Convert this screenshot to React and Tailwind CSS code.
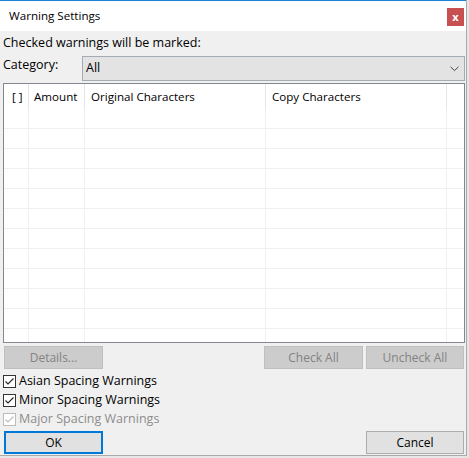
import React from "react";

const font = { fontFamily: '"Open Sans", "Noto Sans", sans-serif' };

function Check({ disabled }) {
  return (
    <span
      className={`w-[13px] h-[13px] border flex items-center justify-center shrink-0 bg-white ${
        disabled ? "border-[#bcbcbc]" : "border-[#333333]"
      }`}
    >
      <svg width="11" height="11" viewBox="0 0 11 11">
        <path
          d="M1.5 5.5 L4 8 L9.5 2.5"
          fill="none"
          stroke={disabled ? "#bcbcbc" : "#222222"}
          strokeWidth="1.1"
        />
      </svg>
    </span>
  );
}

function Btn({ children, disabled, primary, className = "" }) {
  const base = "h-[23px] flex items-center justify-center text-[12px] leading-none";
  let cls;
  if (disabled) cls = "bg-[#cccccc] border border-[#bfbfbf] text-[#838383]";
  else if (primary) cls = "bg-[#e1e1e1] border-2 border-[#0078d7] text-black";
  else cls = "bg-[#e1e1e1] border border-[#adadad] text-black";
  return <div className={`${base} ${cls} ${className}`}>{children}</div>;
}

export default function App() {
  const rows = Array.from({ length: 12 });
  return (
    <div className="w-[469px] h-[458px] bg-[#e6e6e6] overflow-hidden" style={font}>
      <div className="w-[467px] h-[456px] border-r border-b border-[#a9a9a9] bg-[#f0f0f0] flex flex-col">
        <div className="h-px bg-[#1883d7] w-full" />
        <div className="h-[30px] bg-white flex items-start justify-between">
          <span className="text-[11.6px] text-black pl-[9px] pt-[7px] leading-[16px]">Warning Settings</span>
          <div className="mt-[7px] mr-[2px] w-[17px] h-[18px] bg-[#c75050] flex items-center justify-center">
            <span className="text-white text-[11px] font-bold leading-none -mt-px">x</span>
          </div>
        </div>
        <div className="flex flex-col pl-[3px] pr-px">
          <div className="h-[16px] mt-[4px] text-[12.5px] leading-[16px] text-black">Checked warnings will be marked:</div>
          <div className="flex items-start mt-[5px] h-[25px]">
            <span className="w-[79px] text-[12.5px] leading-[16px] text-black mt-[1px]">Category:</span>
            <div className="flex-1 h-[25px] bg-[#e3e3e3] border border-[#a3abb5] flex items-center justify-between pl-[3px] pr-[5px]">
              <span className="text-[12.5px] leading-none text-black">All</span>
              <svg width="9" height="6" viewBox="0 0 9 6">
                <path d="M0.5 0.8 L4.5 4.6 L8.5 0.8" fill="none" stroke="#444" strokeWidth="1" />
              </svg>
            </div>
          </div>
          <div className="mt-[2px] h-[260px] border border-[#828790] bg-white overflow-hidden flex flex-col">
            <div className="h-[25px] flex shrink-0 text-[11.6px] text-black leading-[16px]">
              <div className="w-[25px] border-r border-[#e5e5e5] pl-[8px] flex items-center">[ ]</div>
              <div className="w-[56px] border-r border-[#e5e5e5] pl-[5px] flex items-center">Amount</div>
              <div className="w-[181px] border-r border-[#e5e5e5] pl-[6px] flex items-center">Original Characters</div>
              <div className="w-[181px] border-r border-[#e5e5e5] pl-[6px] flex items-center">Copy Characters</div>
              <div className="flex-1" />
            </div>
            {rows.map((_, i) => (
              <div key={i} className="h-[20px] flex shrink-0 border-b border-[#f0f0f0]">
                <div className="w-[25px] border-r border-[#f0f0f0]" />
                <div className="w-[56px] border-r border-[#f0f0f0]" />
                <div className="w-[181px] border-r border-[#f0f0f0]" />
                <div className="w-[181px] border-r border-[#f0f0f0]" />
                <div className="flex-1" />
              </div>
            ))}
          </div>
          <div className="mt-[3px] flex items-center pl-px pr-px">
            <Btn disabled className="w-[99px]">Details...</Btn>
            <div className="flex-1" />
            <Btn disabled className="w-[99px]">Check All</Btn>
            <Btn disabled className="w-[98px] ml-[3px]">Uncheck All</Btn>
          </div>
          <div className="mt-[3px] flex flex-col">
            <div className="h-[19px] flex items-center gap-[3px] text-[12.5px] text-black">
              <Check />
              <span>Asian Spacing Warnings</span>
            </div>
            <div className="h-[19px] flex items-center gap-[3px] text-[12.5px] text-black">
              <Check />
              <span>Minor Spacing Warnings</span>
            </div>
            <div className="h-[19px] flex items-center gap-[3px] text-[12.5px] text-[#8d8d8d]">
              <Check disabled />
              <span>Major Spacing Warnings</span>
            </div>
          </div>
          <div className="mt-[2px] flex items-center pl-px pr-px">
            <Btn primary className="w-[99px]">OK</Btn>
            <div className="flex-1" />
            <Btn className="w-[98px]">Cancel</Btn>
          </div>
        </div>
      </div>
    </div>
  );
}
